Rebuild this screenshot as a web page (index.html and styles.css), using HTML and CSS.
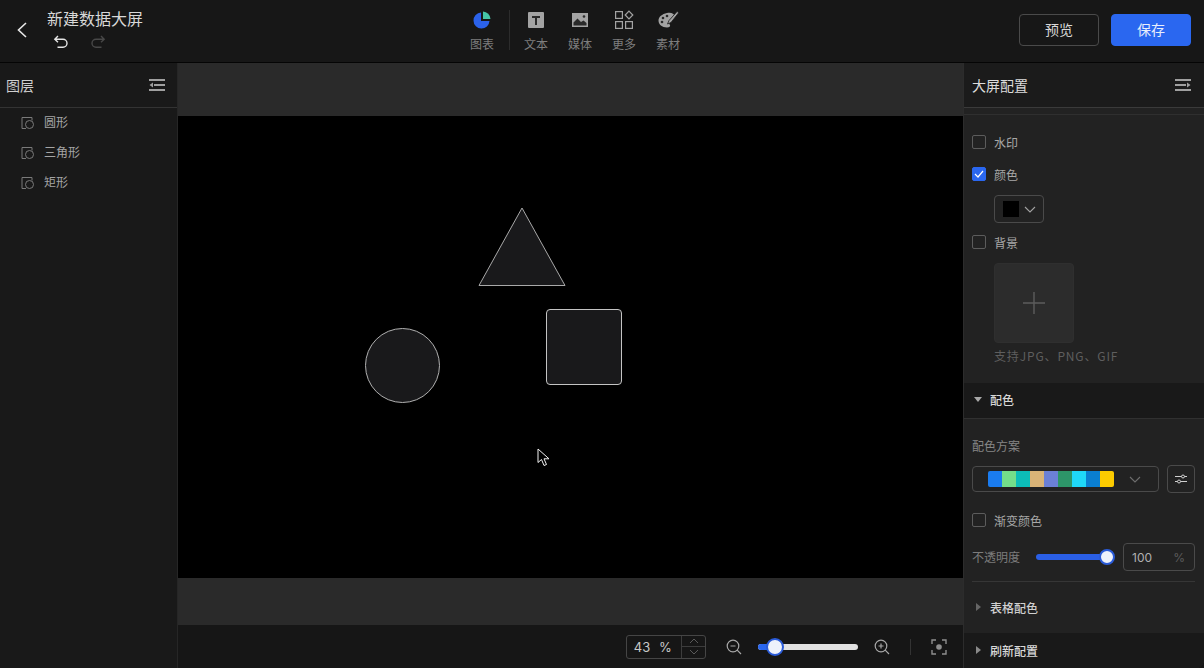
FILE: index.html
```html
<!DOCTYPE html>
<html lang="zh-CN">

<head>
    <meta charset="UTF-8">
    <meta name="viewport" content="width=device-width, initial-scale=1.0">
    <title>新建数据大屏</title>
    <link rel="stylesheet" href="styles.css">
</head>

<body>
    <header class="topbar">
        <div class="topbar-left">
            <svg class="back" width="14" height="18" viewBox="0 0 14 18"><path d="M11 2 3.500 9 11 16" fill="none" stroke="#e8e8e8" stroke-width="1.600"/></svg>
            <div>
                <div class="doc-title">新建数据大屏</div>
                <div class="history">
                    <svg width="16" height="16" viewBox="0 0 16 16"><path d="M5 2 1.800 5.200 5 8.200M2 5.200h8a3.900 3.900 0 0 1 0 8H4.500" fill="none" stroke="#e6e6e6" stroke-width="1.400"/></svg>
                    <svg width="16" height="16" viewBox="0 0 16 16"><path d="M11 2l3.200 3.200L11 8.200M14 5.200H6a3.900 3.900 0 0 0 0 8h5.500" fill="none" stroke="#484848" stroke-width="1.400"/></svg>
                </div>
            </div>
        </div>

        <nav class="tools">
            <div class="tool">
                <svg width="20" height="20" viewBox="0 0 20 20"><path d="M9 2.500a8 8 0 1 0 8.500 8.500H9z" fill="#2b62ea"/><path d="M11 1.500a7.800 7.800 0 0 1 7.500 7.500H11z" fill="#45c4a6"/></svg>
                <span>图表</span>
            </div>
            <div class="tool-sep"></div>
            <div class="tool">
                <svg width="20" height="20" viewBox="0 0 20 20"><rect x="2" y="2" width="16" height="16" rx="1" fill="#a3a3a3"/><path d="M6 6h8v2H11v7H9V8H6z" fill="#2a2a2a"/></svg>
                <span>文本</span>
            </div>
            <div class="tool">
                <svg width="20" height="20" viewBox="0 0 20 20"><rect x="2" y="3" width="16" height="14" fill="#a3a3a3"/><path d="M3.500 15.500v-3l4-4 3.500 3.500 2.500-1.500 3 2.500v2.500z" fill="#2a2a2a"/><circle cx="14" cy="6.500" r="1.300" fill="#2a2a2a"/></svg>
                <span>媒体</span>
            </div>
            <div class="tool">
                <svg width="20" height="20" viewBox="0 0 20 20" fill="none" stroke="#a3a3a3" stroke-width="1.200"><rect x="1.600" y="1.600" width="6.800" height="6.800"/><rect x="1.600" y="11.600" width="6.800" height="6.800"/><rect x="11.600" y="11.600" width="6.800" height="6.800"/><path d="M15 1.200 18.800 5 15 8.800 11.200 5z"/></svg>
                <span>更多</span>
            </div>
            <div class="tool">
                <svg width="22" height="20" viewBox="0 0 22 20"><path d="M10 3c4-1 7 .5 8 3l-5 6c-1 1-1 2 0 3 .5 1-.5 2.500-3 2.500C5 17.500 1.500 14.500 1.500 10.500 1.500 7 5 4 10 3z" fill="#a3a3a3"/><circle cx="6" cy="8" r="1.300" fill="#2a2a2a"/><circle cx="5" cy="12" r="1.300" fill="#2a2a2a"/><circle cx="10" cy="6" r="1.300" fill="#2a2a2a"/><path d="M20.500 1 12 10.500l-1.500 3.500 3.500-1.500L21.500 3z" fill="#a3a3a3" stroke="#1a1a1a" stroke-width=".8"/></svg>
                <span>素材</span>
            </div>
        </nav>

        <div class="actions">
            <button class="btn">预览</button>
            <button class="btn btn-primary">保存</button>
        </div>
    </header>

    <main class="workspace">
        <aside class="layers">
            <div class="panel-head">
                <span>图层</span>
                <svg width="16" height="14" viewBox="0 0 16 14" fill="none" stroke="#a0a0a0" stroke-width="2"><path d="M0 2h16M5 7h11M0 12h16"/><path d="M4 4.500 .5 7 4 9.500z" fill="#a0a0a0" stroke="none"/></svg>
            </div>
            <ul class="layer-list">
                <li class="layer-item"><svg class="shape-icon" width="14" height="14" viewBox="0 0 14 14" fill="none" stroke="#7a7a7a"><path d="M5 12.500H1V1.500h10v3"/><circle cx="8.500" cy="8.500" r="4"/></svg>圆形</li>
                <li class="layer-item"><svg class="shape-icon" width="14" height="14" viewBox="0 0 14 14" fill="none" stroke="#7a7a7a"><path d="M5 12.500H1V1.500h10v3"/><circle cx="8.500" cy="8.500" r="4"/></svg>三角形</li>
                <li class="layer-item"><svg class="shape-icon" width="14" height="14" viewBox="0 0 14 14" fill="none" stroke="#7a7a7a"><path d="M5 12.500H1V1.500h10v3"/><circle cx="8.500" cy="8.500" r="4"/></svg>矩形</li>
            </ul>
        </aside>

        <section class="canvas-wrap">
            <div class="stage-band band-top"></div>
            <div class="stage">
                <svg class="shape shape-tri" width="88" height="80" viewBox="0 0 88 80"><path d="M44 1 87 78.500H1z" fill="#19191b" stroke="#a9a9a9"/></svg>
                <div class="shape shape-circle"></div>
                <div class="shape shape-rect"></div>
                <svg class="cursor" width="13" height="19" viewBox="0 0 13 19"><path d="M1 1v13.500l3.500-3 2.500 6 2.500-1-2.500-5.700H12z" fill="#000" stroke="#f2f2f2"/></svg>
            </div>
            <div class="stage-band band-bottom"></div>
            <div class="zoombar">
                <div class="zoom-input">
                    <span class="zoom-value">43</span>
                    <span class="zoom-unit">%</span>
                    <div class="stepper">
                        <div class="step"><svg width="10" height="6" viewBox="0 0 10 6"><path d="M1 5l4-4 4 4" fill="none" stroke="#5a5a5a"/></svg></div>
                        <div class="step"><svg width="10" height="6" viewBox="0 0 10 6"><path d="M1 1l4 4 4-4" fill="none" stroke="#5a5a5a"/></svg></div>
                    </div>
                </div>
                <svg class="zoom-minus" width="16" height="16" viewBox="0 0 16 16" fill="none" stroke="#a8a8a8" stroke-width="1.200"><circle cx="7" cy="7" r="5.800"/><path d="M4.500 7h5M11.200 11.200 15 15"/></svg>
                <div class="zoom-slider"><div class="zoom-fill"></div><div class="zoom-thumb"></div></div>
                <svg class="zoom-plus" width="16" height="16" viewBox="0 0 16 16" fill="none" stroke="#a8a8a8" stroke-width="1.200"><circle cx="7" cy="7" r="5.800"/><path d="M4.500 7h5M7 4.500v5M11.200 11.200 15 15"/></svg>
                <div class="zoom-sep"></div>
                <svg class="zoom-fit" width="16" height="16" viewBox="0 0 16 16" fill="none" stroke="#8e8e8e" stroke-width="1.400"><path d="M1 5V1h4M11 1h4v4M15 11v4h-4M5 15H1v-4"/><circle cx="8" cy="8" r="2.800" fill="#8e8e8e" stroke="none"/></svg>
            </div>
        </section>

        <aside class="config">
            <div class="panel-head config-head">
                <span>大屏配置</span>
                <svg width="16" height="14" viewBox="0 0 16 14" fill="none" stroke="#a0a0a0" stroke-width="2"><path d="M0 2h16M0 7h11M0 12h16"/><path d="M12 4.500 15.500 7 12 9.500z" fill="#a0a0a0" stroke="none"/></svg>
            </div>
            <div class="config-body">
                <label class="check-row row-first"><span class="check"></span>水印</label>
                <label class="check-row"><span class="check check-on"><svg width="10" height="8" viewBox="0 0 10 8"><path d="M1 4l3 3 5-6" fill="none" stroke="#fff" stroke-width="1.200"/></svg></span>颜色</label>
                <div class="color-pick"><span class="color-box"></span><svg width="12" height="7" viewBox="0 0 12 7"><path d="M1 1l5 5 5-5" fill="none" stroke="#a0a0a0" stroke-width="1.100"/></svg></div>
                <label class="check-row row-bg"><span class="check"></span>背景</label>
                <div class="upload"><svg width="22" height="22" viewBox="0 0 22 22"><path d="M11 0v22M0 11h22" stroke="#5c5c5c" stroke-width="1.400"/></svg></div>
                <div class="upload-tip">支持JPG、PNG、GIF</div>
            </div>
            <div class="section-head">
                <svg width="8" height="5" viewBox="0 0 8 5"><path d="M0 0h8L4 5z" fill="#a8a8a8"/></svg>
                配色
            </div>
            <div class="color-body">
                <div class="field-label">配色方案</div>
                <div class="scheme-row">
                    <div class="scheme-select">
                        <div class="swatches">
                            <i class="sw-1"></i><i class="sw-2"></i><i class="sw-3"></i><i class="sw-4"></i><i class="sw-5"></i><i class="sw-6"></i><i class="sw-7"></i><i class="sw-8"></i><i class="sw-9"></i>
                        </div>
                        <svg width="12" height="7" viewBox="0 0 12 7"><path d="M1 1l5 5 5-5" fill="none" stroke="#6e6e6e" stroke-width="1.100"/></svg>
                    </div>
                    <div class="scheme-btn"><svg width="12" height="12" viewBox="0 0 12 12" fill="none" stroke="#d0d0d0"><path d="M0 3.500h6.500M9.500 3.500H12M0 8.500h2.500M5.500 8.500H12"/><circle cx="8" cy="3.500" r="1.500"/><circle cx="4" cy="8.500" r="1.500"/></svg></div>
                </div>
                <label class="check-row row-gradient"><span class="check"></span>渐变颜色</label>
                <div class="opacity-row">
                    <span class="opacity-label">不透明度</span>
                    <div class="opacity-slider"><div class="opacity-thumb"></div></div>
                    <div class="opacity-input"><span>100</span><span class="unit">%</span></div>
                </div>
                <div class="divider"></div>
                <div class="sub-head">
                    <svg width="5" height="8" viewBox="0 0 5 8"><path d="M0 0v8l5-4z" fill="#666"/></svg>
                    表格配色
                </div>
            </div>
            <div class="section-head section-refresh">
                <svg width="5" height="8" viewBox="0 0 5 8"><path d="M0 0v8l5-4z" fill="#8a8a8a"/></svg>
                刷新配置
            </div>
        </aside>
    </main>
</body>

</html>
```

FILE: styles.css
```css
* {
    box-sizing: border-box;
}

html,
body {
    margin: 0;
    height: 100%;
    overflow: hidden;
}

body {
    width: 1204px;
    height: 668px;
    background-color: #161616;
    color: #d4d4d4;
    font-family: "Noto Sans CJK SC", "Liberation Sans", sans-serif;
    font-size: 12px;
    display: flex;
    flex-direction: column;
}

ul {
    list-style: none;
    margin: 0;
    padding: 0;
}

/* top bar */
.topbar {
    height: 63px;
    flex: none;
    background-color: #171717;
    border-bottom: 1px solid #050505;
    display: flex;
    align-items: flex-start;
    position: relative;
}

.topbar-left {
    width: 400px;
    display: flex;
    padding: 8px 0 0 15px;
}

.back {
    margin: 13px 18px 0 0;
}

.doc-title {
    font-size: 16px;
    line-height: 20px;
    color: #d8d8d8;
}

.history {
    display: flex;
    gap: 21px;
    margin-top: 6px;
    padding-left: 6px;
}

.tools {
    display: flex;
    align-items: flex-start;
    padding: 10px 0 0 60px;
}

.tool {
    width: 44px;
    display: flex;
    flex-direction: column;
    align-items: center;
    color: #7e7e7e;
    line-height: 16px;
    gap: 6px;
}

.tool svg {
    height: 20px;
}

.tool-sep {
    width: 1px;
    height: 40px;
    background-color: #2c2c2c;
    margin: 0 4px 0 5px;
}

.actions {
    margin-left: auto;
    display: flex;
    gap: 12px;
    padding: 14px 13px 0 0;
}

.btn {
    width: 80px;
    height: 32px;
    padding: 0 0 2px;
    border: 1px solid #4a4a4a;
    border-radius: 4px;
    background: transparent;
    color: #d8d8d8;
    font: inherit;
    font-size: 14px;
}

.btn-primary {
    background-color: #2a67f0;
    border-color: #2a67f0;
    color: #e8eefc;
}

/* main area */
.workspace {
    flex: 1;
    display: flex;
    min-height: 0;
}

.layers {
    width: 178px;
    flex: none;
    background-color: #191919;
    border-right: 1px solid #262626;
}

.panel-head {
    height: 45px;
    flex: none;
    display: flex;
    align-items: center;
    justify-content: space-between;
    padding: 0 12px 0 6px;
    border-bottom: 1px solid #333;
    font-size: 14px;
    color: #d0d0d0;
}

.layer-item {
    height: 30px;
    display: flex;
    align-items: center;
    padding: 0 0 4px 21px;
    color: #a4a4a4;
}

.shape-icon {
    margin: 4px 9px 0 0;
}

.canvas-wrap {
    width: 785px;
    flex: none;
    display: flex;
    flex-direction: column;
}

.stage-band {
    background-color: #2a2a2a;
}

.band-top {
    height: 53px;
}

.band-bottom {
    height: 47px;
}

.stage {
    height: 462px;
    background-color: #000;
    position: relative;
}

.shape {
    position: absolute;
}

.shape-tri {
    left: 300px;
    top: 91px;
}

.shape-circle {
    left: 187px;
    top: 212px;
    width: 75px;
    height: 75px;
    border-radius: 50%;
    background-color: #19191b;
    border: 1px solid #b0b0b0;
}

.shape-rect {
    left: 368px;
    top: 193px;
    width: 76px;
    height: 76px;
    border-radius: 4px;
    background-color: #19191b;
    border: 1px solid #c4c4c4;
}

.cursor {
    position: absolute;
    left: 359px;
    top: 332px;
}

.zoombar {
    height: 43px;
    background-color: #161616;
    display: flex;
    align-items: center;
    padding: 0 16px 0 448px;
}

.zoom-input {
    width: 80px;
    height: 24px;
    border: 1px solid #454545;
    border-radius: 3px;
    display: flex;
    align-items: center;
    color: #c8c8c8;
    font-family: "Inter", "Liberation Sans", sans-serif;
    font-size: 13px;
}

.zoom-value {
    width: 24px;
    margin-left: 3px;
    text-align: center;
}

.zoom-unit {
    width: 25px;
    margin-left: -1px;
    text-align: center;
}

.stepper {
    margin-left: auto;
    width: 24px;
    height: 100%;
    border-left: 1px solid #3c3c3c;
    display: flex;
    flex-direction: column;
}

.step {
    flex: 1;
    display: flex;
    align-items: center;
    justify-content: center;
}

.step + .step {
    border-top: 1px solid #3c3c3c;
}

.zoom-minus {
    margin-left: 20px;
}

.zoom-slider {
    width: 100px;
    height: 6px;
    margin-left: 16px;
    border-radius: 3px;
    background-color: #e2e2e2;
    position: relative;
}

.zoom-fill {
    width: 17px;
    height: 100%;
    border-radius: 3px 0 0 3px;
    background-color: #2a67f0;
}

.zoom-thumb {
    position: absolute;
    left: 8px;
    top: -6px;
    width: 18px;
    height: 18px;
    border-radius: 50%;
    background-color: #eef2fb;
    border: 2px solid #2a5bd8;
}

.zoom-plus {
    margin-left: 16px;
}

.zoom-sep {
    width: 1px;
    height: 16px;
    background-color: #333;
    margin-left: 20px;
}

.zoom-fit {
    margin-left: 20px;
}

/* right panel */
.config {
    width: 241px;
    flex: none;
    background-color: #222;
    border-left: 1px solid #2c2c2c;
    border-bottom-right-radius: 8px;
    display: flex;
    flex-direction: column;
    overflow: hidden;
}

.config-head {
    background-color: #1b1b1b;
    padding: 0 13px 0 8px;
    border-bottom: 1px solid #3a3a3a;
    color: #dcdcdc;
}

.config-body {
    height: 269px;
    flex: none;
    padding: 7px 0 0 8px;
    border-top: 1px solid #2f2f2f;
    margin-top: 6px;
}

.check-row {
    display: flex;
    align-items: center;
    height: 20px;
    color: #a8a8a8;
}

.row-first {
    margin-top: 10px;
}

.check-row + .check-row {
    margin-top: 12px;
}

.check {
    width: 14px;
    height: 14px;
    margin-right: 8px;
    border: 1px solid #5c5c5c;
    border-radius: 2px;
    display: flex;
    align-items: center;
    justify-content: center;
}

.check-on {
    background-color: #2a67f0;
    border-color: #2a67f0;
}

.color-pick {
    width: 50px;
    height: 28px;
    margin: 11px 0 0 22px;
    border: 1px solid #4a4a4a;
    border-radius: 4px;
    display: flex;
    align-items: center;
    gap: 5px;
    padding-left: 8px;
}

.color-box {
    width: 16px;
    height: 16px;
    background-color: #000;
}

.row-bg {
    margin-top: 9px;
}

.upload {
    width: 80px;
    height: 80px;
    margin: 11px 0 0 22px;
    border: 1px solid #2f2f2f;
    border-radius: 4px;
    background-color: #2c2c2c;
    display: flex;
    align-items: center;
    justify-content: center;
}

.upload-tip {
    margin: 4px 0 0 22px;
    line-height: 18px;
    letter-spacing: .85px;
    color: #5e5e5e;
}

.section-head {
    height: 36px;
    flex: none;
    background-color: #191919;
    border-bottom: 1px solid #303030;
    display: flex;
    align-items: center;
    gap: 8px;
    padding: 0 0 2px 10px;
    color: #d8d8d8;
    font-weight: 500;
}

.color-body {
    padding: 0 9px 0 8px;
    height: 214px;
    flex: none;
}

.field-label {
    margin-top: 18px;
    line-height: 18px;
    color: #868686;
}

.scheme-row {
    display: flex;
    gap: 8px;
    margin-top: 11px;
}

.scheme-select {
    width: 187px;
    height: 26px;
    border: 1px solid #4a4a4a;
    border-radius: 4px;
    display: flex;
    align-items: center;
    justify-content: space-between;
    padding: 0 17px 0 15px;
}

.swatches {
    display: flex;
    height: 16px;
    border-radius: 2px;
    overflow: hidden;
}

.swatches i {
    width: 14px;
}

.sw-1 { background-color: #1a7cf0; }
.sw-2 { background-color: #74de8a; }
.sw-3 { background-color: #0cbcb8; }
.sw-4 { background-color: #d9b377; }
.sw-5 { background-color: #6b80d6; }
.sw-6 { background-color: #2d9569; }
.sw-7 { background-color: #1fd8f8; }
.sw-8 { background-color: #0a7ed0; }
.sw-9 { background-color: #fccb00; }

.scheme-btn {
    width: 28px;
    height: 28px;
    margin-top: -1px;
    border: 1px solid #4a4a4a;
    border-radius: 4px;
    display: flex;
    align-items: center;
    justify-content: center;
}

.row-gradient {
    margin-top: 17px;
}

.opacity-row {
    display: flex;
    align-items: center;
    margin-top: 13px;
    height: 28px;
}

.opacity-label {
    width: 64px;
    padding-bottom: 2px;
    color: #7c7c7c;
}

.opacity-slider {
    width: 72px;
    height: 6px;
    border-radius: 3px;
    background-color: #2a5fe6;
    position: relative;
}

.opacity-thumb {
    position: absolute;
    right: -7px;
    top: -5px;
    width: 16px;
    height: 16px;
    border-radius: 50%;
    background-color: #eef2fb;
    border: 2px solid #2a5bd8;
}

.opacity-input {
    width: 72px;
    height: 28px;
    margin-left: auto;
    border: 1px solid #4a4a4a;
    border-radius: 4px;
    display: flex;
    align-items: center;
    justify-content: space-between;
    padding: 0 9px 0 8px;
    color: #b0b0b0;
    font-family: "Inter", "Liberation Sans", sans-serif;
}

.unit {
    color: #5c5c5c;
}

.divider {
    height: 1px;
    margin-top: 10px;
    background-color: #363636;
}

.sub-head {
    display: flex;
    align-items: center;
    gap: 9px;
    height: 20px;
    margin-top: 15px;
    padding-left: 4px;
    color: #d0d0d0;
    font-weight: 500;
}

.section-refresh {
    border-bottom: none;
    padding-left: 12px;
    gap: 9px;
}
```
